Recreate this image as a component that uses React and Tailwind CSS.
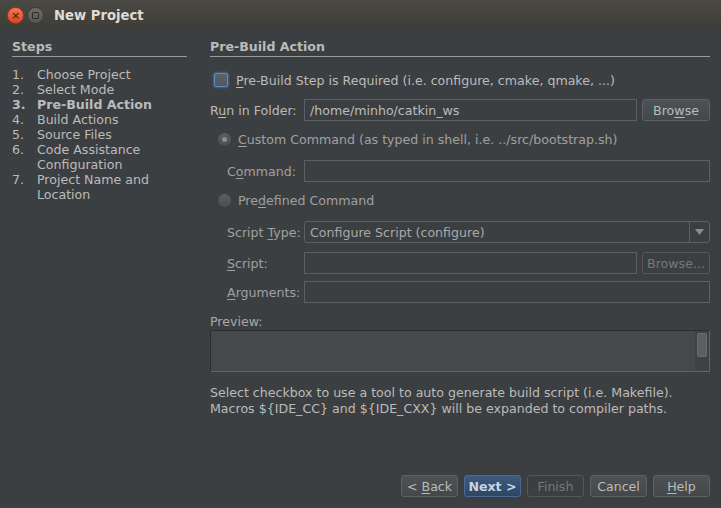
import { useState } from 'react';

const STEPS = [
  { n: '1.', t: 'Choose Project' },
  { n: '2.', t: 'Select Mode' },
  { n: '3.', t: 'Pre-Build Action', active: true },
  { n: '4.', t: 'Build Actions' },
  { n: '5.', t: 'Source Files' },
  { n: '6.', t: 'Code Assistance Configuration' },
  { n: '7.', t: 'Project Name and Location' },
];

// mnemonic helper: underline one letter
function Mn({ text, at }) {
  return (
    <>
      {text.slice(0, at)}
      <span className="underline underline-offset-2">{text[at]}</span>
      {text.slice(at + 1)}
    </>
  );
}

function Field({ value = '', className = '' }) {
  return (
    <div className={`h-[22px] border border-[#5e6060] bg-[#3c3f41] px-[5px] flex items-center text-[#bbbbbb] ${className}`}>
      {value}
    </div>
  );
}

function Btn({ children, primary, disabled, className = '' }) {
  return (
    <div
      className={`h-[22px] rounded-[3px] border flex items-center justify-center ${className}
        ${primary ? 'bg-gradient-to-b from-[#3d5a80] to-[#2c4665] border-[#4a6a92] text-[#c9d4e0] font-bold' :
          disabled ? 'border-[#54575a] bg-[#3c3f41] text-[#777777]' :
          'bg-gradient-to-b from-[#4e5254] to-[#44484a] border-[#5e6264] text-[#bbbbbb]'}`}
    >
      <span className="whitespace-pre">{children}</span>
    </div>
  );
}

function Radio({ checked }) {
  return (
    <div className="w-[15px] h-[15px] rounded-full bg-gradient-to-b from-[#5b5e60] to-[#4b4e50] border border-[#3a3c3e] flex items-center justify-center">
      {checked && <div className="w-[5px] h-[5px] rounded-full bg-[#8a8d8f]" />}
    </div>
  );
}

export default function App() {
  const [required, setRequired] = useState(false);

  return (
    <div className="w-[721px] h-[508px] bg-[#3c3f41] flex flex-col text-[12.6px] leading-[15px] text-[#bbbbbb] font-['DejaVu_Sans',sans-serif] overflow-hidden">
      {/* title bar */}
      <div className="h-[30px] shrink-0 bg-gradient-to-b from-[#4a4944] to-[#3d3c38] flex items-center">
        <div className="ml-[7px] w-[17px] h-[17px] rounded-full bg-gradient-to-b from-[#f37a4f] to-[#d9441c] border border-[#a8361a] flex items-center justify-center text-[#3a1a10] text-[11px] leading-none">
          ×
        </div>
        <div className="ml-[3px] w-[17px] h-[17px] rounded-full bg-gradient-to-b from-[#6e6d69] to-[#55544f] border border-[#3a3935] flex items-center justify-center">
          <div className="w-[7px] h-[7px] border border-[#2e2d2a] rounded-[1px]" />
        </div>
        <div className="ml-[10px] text-[13.2px] font-bold text-[#dfdbd2]">New Project</div>
      </div>

      <div className="flex-1 flex pl-[12px] pr-[11px] pt-[9px]">
        {/* steps */}
        <div className="w-[175px] shrink-0">
          <div className="h-[16px] leading-[16px] font-bold border-b border-[#9a9a9a] pb-[1px] box-content">Steps</div>
          <div className="mt-[10px]">
            {STEPS.map(s => (
              <div key={s.n} className={`flex ${s.active ? 'font-bold' : ''}`}>
                <div className="w-[25px] shrink-0">{s.n}</div>
                <div className="w-[140px]">{s.t}</div>
              </div>
            ))}
          </div>
        </div>

        {/* right panel */}
        <div className="ml-[23px] flex-1 flex flex-col">
          <div className="h-[16px] leading-[16px] font-bold border-b border-[#9a9a9a] pb-[1px] box-content">Pre-Build Action</div>

          <div className="mt-[12px] h-[22px] flex items-center pl-[4px]">
            <div
              onClick={() => setRequired(!required)}
              className="w-[14px] h-[14px] rounded-[2px] bg-gradient-to-b from-[#5f6264] to-[#53565a] border border-[#5d8fd0] shadow-[0_0_2px_1px_rgba(70,120,190,0.6)]"
            />
            <span className="ml-[8px]"><Mn text="Pre-Build Step is Required (i.e. configure, cmake, qmake, ...)" at={0} /></span>
          </div>

          <div className="mt-[8px] h-[22px] flex items-center">
            <div className="w-[94px] shrink-0"><Mn text="Run in Folder:" at={1} /></div>
            <Field value="/home/minho/catkin_ws" className="flex-1" />
            <Btn className="ml-[5px] w-[68px]"><Mn text="Browse" at={3} /></Btn>
          </div>

          <div className="mt-[7px] h-[22px] flex items-center pl-[7px] text-[#a0a0a0]">
            <Radio checked />
            <span className="ml-[6px]"><Mn text="Custom Command (as typed in shell, i.e. ../src/bootstrap.sh)" at={0} /></span>
          </div>

          <div className="mt-[10px] h-[22px] flex items-center pl-[17px]">
            <div className="w-[77px] shrink-0 text-[#a0a0a0]"><Mn text="Command:" at={1} /></div>
            <Field className="flex-1" />
          </div>

          <div className="mt-[7px] h-[22px] flex items-center pl-[7px] text-[#a0a0a0]">
            <Radio />
            <span className="ml-[6px]"><Mn text="Predefined Command" at={3} /></span>
          </div>

          <div className="mt-[10px] h-[22px] flex items-center pl-[17px]">
            <div className="w-[77px] shrink-0 text-[#a0a0a0]"><Mn text="Script Type:" at={7} /></div>
            <div className="flex-1 h-[22px] rounded-[3px] border border-[#5e6060] flex items-center">
              <div className="flex-1 pl-[5px] text-[#a8a8a8]">Configure Script (configure)</div>
              <div className="w-[20px] h-full border-l border-[#5e6060] flex items-center justify-center">
                <svg width="9" height="6" viewBox="0 0 9 6"><path d="M0 0h9L4.5 6z" fill="#8c8c8c" /></svg>
              </div>
            </div>
          </div>

          <div className="mt-[9px] h-[22px] flex items-center pl-[17px]">
            <div className="w-[77px] shrink-0 text-[#a0a0a0]"><Mn text="Script:" at={0} /></div>
            <Field className="flex-1" />
            <Btn disabled className="ml-[5px] w-[68px]">Browse...</Btn>
          </div>

          <div className="mt-[7px] h-[22px] flex items-center pl-[17px]">
            <div className="w-[77px] shrink-0 text-[#a0a0a0]"><Mn text="Arguments:" at={0} /></div>
            <Field className="flex-1" />
          </div>

          <div className="mt-[11px] h-[16px] leading-[16px] text-[#a8a8a8]">Preview:</div>
          <div className="h-[42px] bg-[#45494a] border border-[#2b2d2e] border-b-[#646464] border-r-[#646464] flex justify-end">
            <div className="w-[14px] h-full bg-[#3f4244] pt-[2px] flex justify-center">
              <div className="w-[10px] h-[24px] rounded-[2px] bg-[#5c5f61] border border-[#6a6d6f]" />
            </div>
          </div>

          <div className="mt-[13px] leading-[16px]">
            <div>Select checkbox to use a tool to auto generate build script (i.e. Makefile).</div>
            <div>Macros ${'{'}IDE_CC{'}'} and ${'{'}IDE_CXX{'}'} will be expanded to compiler paths.</div>
          </div>
        </div>
      </div>

      {/* wizard buttons */}
      <div className="shrink-0 flex justify-end gap-[6px] pr-[11px] pb-[11px]">
        <Btn className="w-[57px]">{'< '}<Mn text="Back" at={0} /></Btn>
        <Btn primary className="w-[57px]">Next &gt;</Btn>
        <Btn disabled className="w-[57px]">Finish</Btn>
        <Btn className="w-[57px]">Cancel</Btn>
        <Btn className="w-[57px]"><Mn text="Help" at={0} /></Btn>
      </div>
    </div>
  );
}
